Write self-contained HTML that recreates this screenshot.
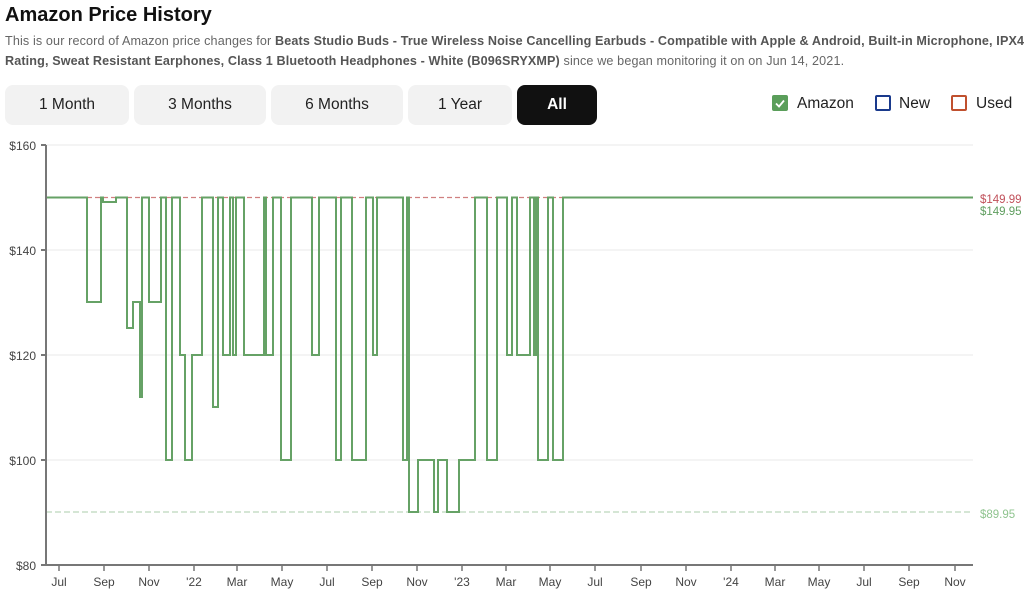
<!DOCTYPE html>
<html><head><meta charset="utf-8"><style>
body{margin:0;background:#fff;font-family:"Liberation Sans",sans-serif;width:1033px;height:600px;overflow:hidden;position:relative}
h1{position:absolute;left:5px;top:4px;margin:0;font-size:20px;font-weight:bold;color:#111}
.desc{position:absolute;left:5px;top:31px;white-space:nowrap;font-size:12.6px;letter-spacing:0.13px;line-height:20px;color:#666}
.desc b{color:#555}
.btn{position:absolute;top:85px;height:40px;background:#f2f2f2;border-radius:8px;font-size:15.5px;color:#222;text-align:center;line-height:40px}
.leg{position:absolute;top:95px;font-size:15.5px;color:#222}
.box{position:absolute;top:95px;width:16px;height:16px;border-radius:2px;box-sizing:border-box}
</style></head><body>
<h1>Amazon Price History</h1>
<div class="desc">This is our record of Amazon price changes for <b>Beats Studio Buds - True Wireless Noise Cancelling Earbuds - Compatible with Apple &amp; Android, Built-in Microphone, IPX4</b><br><b>Rating, Sweat Resistant Earphones, Class 1 Bluetooth Headphones - White (B096SRYXMP)</b> since we began monitoring it on on Jun 14, 2021.</div>
<div class="btn" style="left:5px;width:124px">1 Month</div>
<div class="btn" style="left:134px;width:132px">3 Months</div>
<div class="btn" style="left:271px;width:132px">6 Months</div>
<div class="btn" style="left:408px;width:104px">1 Year</div>
<div class="btn" style="left:517px;width:80px;background:#111;color:#fff;font-weight:bold">All</div>
<div class="box" style="left:772px;background:#5a9e5a"></div>
<svg style="position:absolute;left:772px;top:95px" width="16" height="16"><path d="M4 8.5l3 3 5-6" stroke="#fff" stroke-width="1.8" fill="none"/></svg>
<span class="leg" style="left:797px">Amazon</span>
<div class="box" style="left:875px;border:2px solid #1a3a8c"></div>
<span class="leg" style="left:899px">New</span>
<div class="box" style="left:951px;border:2px solid #c0502e"></div>
<span class="leg" style="left:976px">Used</span>
<svg style="position:absolute;left:0;top:0" width="1033" height="600" font-family="Liberation Sans, sans-serif">
<g stroke="#f0f0f0" stroke-width="1.5">
<line x1="46" y1="145" x2="973" y2="145"/><line x1="46" y1="250" x2="973" y2="250"/><line x1="46" y1="355" x2="973" y2="355"/><line x1="46" y1="460" x2="973" y2="460"/>
</g>
<g font-size="12" fill="#444" text-anchor="end">
<text x="36" y="150">$160</text><text x="36" y="255">$140</text><text x="36" y="360">$120</text><text x="36" y="465">$100</text><text x="36" y="570">$80</text>
</g>
<line x1="87" y1="197.5" x2="973" y2="197.5" stroke="#d08080" stroke-width="1.2" stroke-dasharray="5,3"/>
<line x1="46" y1="512" x2="973" y2="512" stroke="#bcd8bc" stroke-width="1.2" stroke-dasharray="6,3"/>
<path fill="none" stroke="#66a266" stroke-width="2" d="M46 197.5H87V302H101V197.5H103V202H116V197.5H127V328H133V302H140V397H142V197.5H149V302H161V197.5H166V460H172V197.5H180V355H185V460H192V355H202V197.5H213V407H218V197.5H223V355H230V197.5H233V355H236V197.5H244V355H264V197.5H266V355H273V197.5H281V460H291V197.5H312V355H319V197.5H336V460H341V197.5H352V460H366V197.5H373V355H377V197.5H403V460H407V197.5H409V512H418V460H434V512H438V460H447V512H459V460H475V197.5H487V460H497V197.5H507V355H512V197.5H517V355H530V197.5H534V355H536V197.5H538V460H548V197.5H553V460H563V197.5H973"/>
<g stroke="#777" stroke-width="2"><line x1="46" y1="145" x2="46" y2="566"/><line x1="41" y1="565" x2="973" y2="565"/>
<line x1="41" y1="145" x2="46" y2="145"/><line x1="41" y1="250" x2="46" y2="250"/><line x1="41" y1="355" x2="46" y2="355"/><line x1="41" y1="460" x2="46" y2="460"/></g>
<g stroke="#777" stroke-width="1.5">
<path d="M59 565v6M104 565v6M149 565v6M194 565v6M237 565v6M282 565v6M327 565v6M372 565v6M417 565v6M462 565v6M506 565v6M550 565v6M595 565v6M641 565v6M686 565v6M731 565v6M775 565v6M819 565v6M864 565v6M909 565v6M955 565v6"/></g>
<g font-size="12" fill="#444" text-anchor="middle">
<text x="59" y="586">Jul</text><text x="104" y="586">Sep</text><text x="149" y="586">Nov</text><text x="194" y="586">'22</text><text x="237" y="586">Mar</text><text x="282" y="586">May</text><text x="327" y="586">Jul</text><text x="372" y="586">Sep</text><text x="417" y="586">Nov</text><text x="462" y="586">'23</text><text x="506" y="586">Mar</text><text x="550" y="586">May</text><text x="595" y="586">Jul</text><text x="641" y="586">Sep</text><text x="686" y="586">Nov</text><text x="731" y="586">'24</text><text x="775" y="586">Mar</text><text x="819" y="586">May</text><text x="864" y="586">Jul</text><text x="909" y="586">Sep</text><text x="955" y="586">Nov</text>
</g>
<g font-size="11.5">
<text x="980" y="203" fill="#c0505a">$149.99</text>
<text x="980" y="215" fill="#5f9e5f">$149.95</text>
<text x="980" y="518" fill="#8fc48f">$89.95</text>
</g>
</svg>
</body></html>
